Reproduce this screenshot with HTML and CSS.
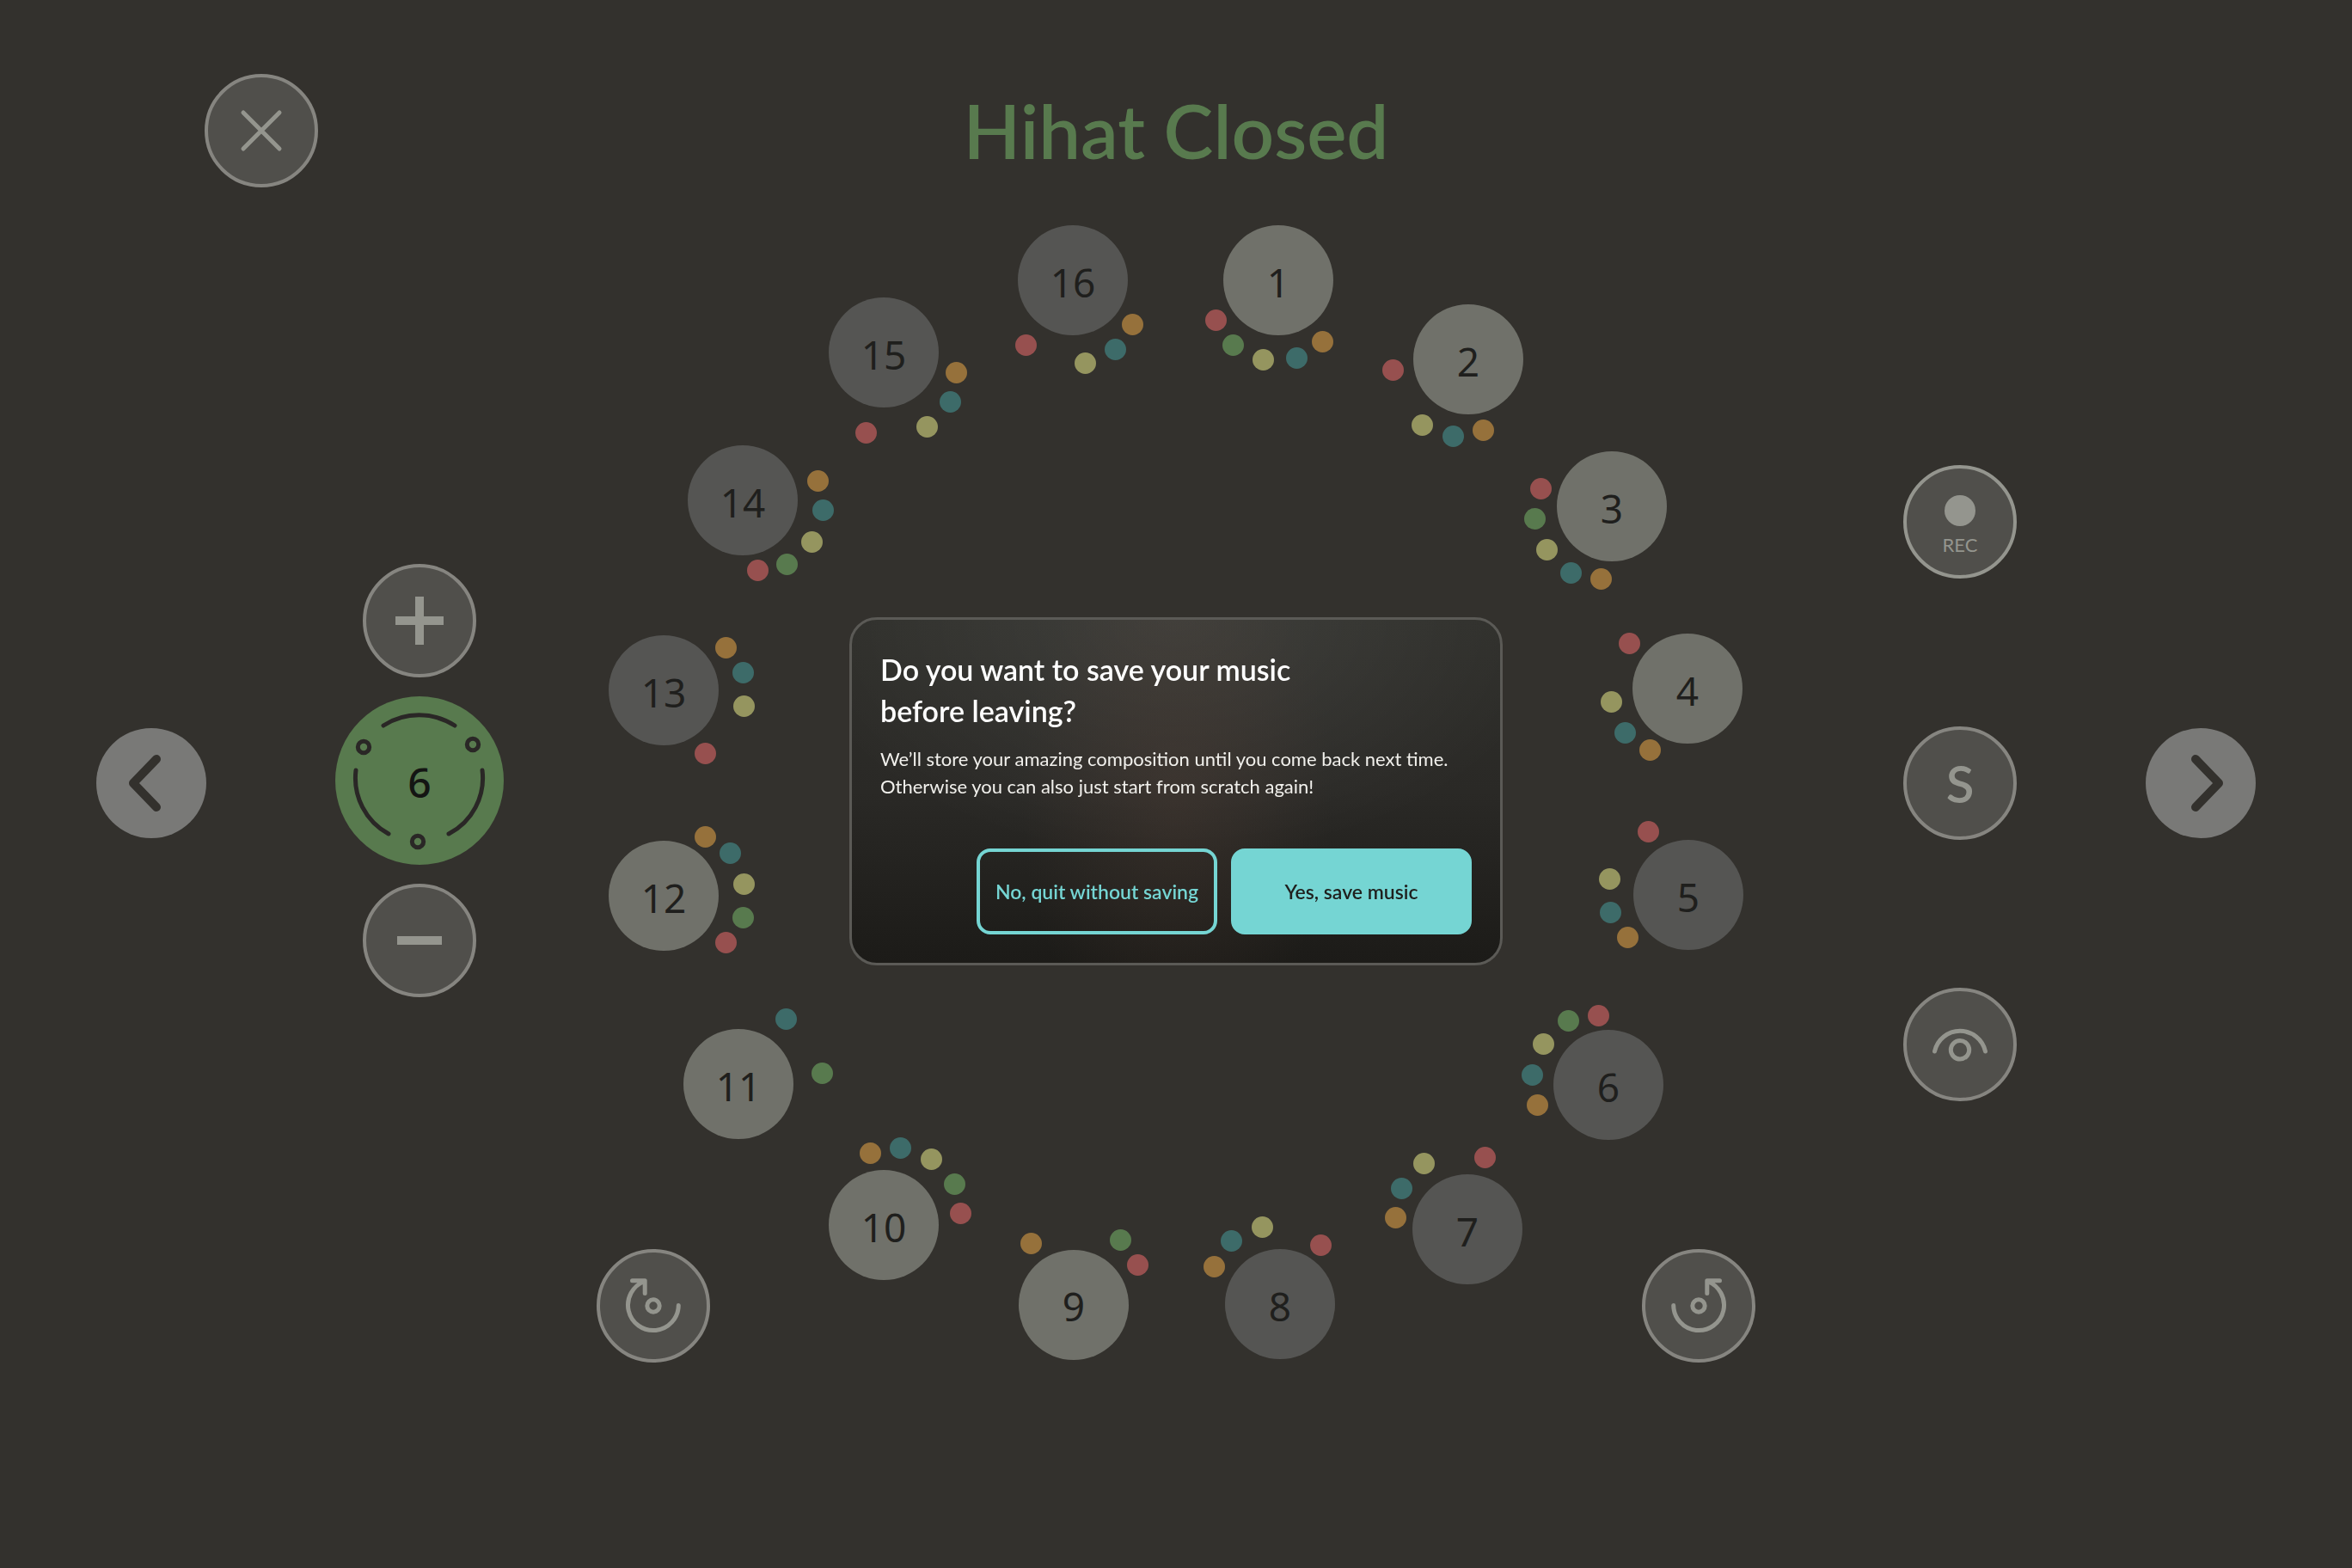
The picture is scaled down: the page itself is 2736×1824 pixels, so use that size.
FILE: index.html
```html
<!DOCTYPE html>
<html lang="en">
<head>
<meta charset="utf-8">
<meta name="viewport" content="width=device-width, initial-scale=1">
<title>Hihat Closed</title>
<link rel="stylesheet" href="styles.css">
</head>
<body>
<div class="page">
  <header class="top">
    <button class="round" type="button" aria-label="Close">
      <svg class="icon" viewBox="-62 -62 124 124"><path d="M-21-21 21 21M21-21-21 21"/></svg>
    </button>
    <h1 class="title">Hihat Closed</h1>
  </header>

  <main class="board">
    <div class="side">
      <button class="arrow" type="button" aria-label="Previous instrument">
        <svg viewBox="-64 -64 128 128"><path d="M6-28-21 0 6 28"/></svg>
      </button>
      <div class="volume">
        <button class="round" type="button" aria-label="Increase">
          <svg class="icon" viewBox="-62 -62 124 124"><path class="bar" d="M-28 0H28M0-28V28"/></svg>
        </button>
        <div class="dial">
          <svg class="dial-art" viewBox="-98 -98 196 196">
            <path d="M-42-64A77 77 0 0 1 41-64M73-12A73 73 0 0 1 34 62M-74-12A74 74 0 0 0-36 62"/>
            <circle cx="-65" cy="-39" r="6.7"/><circle cx="62" cy="-42" r="6.7"/><circle cx="-2" cy="71" r="6.7"/>
          </svg>
          <span class="dial-value">6</span>
        </div>
        <button class="round" type="button" aria-label="Decrease">
          <svg class="icon" viewBox="-62 -62 124 124"><path class="bar" d="M-26 0H26"/></svg>
        </button>
      </div>
    </div>

    <div class="ring">
      <div class="step" style="--x:779;--y:64"><button class="pad on" type="button">1</button><i class="dot red" style="--dx:-73px;--dy:46px"></i><i class="dot green" style="--dx:-53px;--dy:75px"></i><i class="dot yellow" style="--dx:-18px;--dy:92px"></i><i class="dot teal" style="--dx:21px;--dy:90px"></i><i class="dot orange" style="--dx:51px;--dy:71px"></i></div>
      <div class="step" style="--x:1000;--y:156"><button class="pad on" type="button">2</button><i class="dot red" style="--dx:-88px;--dy:12px"></i><i class="dot yellow" style="--dx:-54px;--dy:76px"></i><i class="dot teal" style="--dx:-18px;--dy:89px"></i><i class="dot orange" style="--dx:17px;--dy:82px"></i></div>
      <div class="step" style="--x:1167;--y:327"><button class="pad on" type="button">3</button><i class="dot red" style="--dx:-83px;--dy:-21px"></i><i class="dot green" style="--dx:-90px;--dy:14px"></i><i class="dot yellow" style="--dx:-76px;--dy:50px"></i><i class="dot teal" style="--dx:-48px;--dy:77px"></i><i class="dot orange" style="--dx:-13px;--dy:84px"></i></div>
      <div class="step" style="--x:1255;--y:539"><button class="pad on" type="button">4</button><i class="dot red" style="--dx:-68px;--dy:-53px"></i><i class="dot yellow" style="--dx:-89px;--dy:15px"></i><i class="dot teal" style="--dx:-73px;--dy:51px"></i><i class="dot orange" style="--dx:-44px;--dy:71px"></i></div>
      <div class="step" style="--x:1256;--y:779"><button class="pad" type="button">5</button><i class="dot red" style="--dx:-47px;--dy:-74px"></i><i class="dot yellow" style="--dx:-92px;--dy:-19px"></i><i class="dot teal" style="--dx:-91px;--dy:20px"></i><i class="dot orange" style="--dx:-71px;--dy:49px"></i></div>
      <div class="step" style="--x:1163;--y:1000"><button class="pad" type="button">6</button><i class="dot red" style="--dx:-12px;--dy:-81px"></i><i class="dot green" style="--dx:-47px;--dy:-75px"></i><i class="dot yellow" style="--dx:-76px;--dy:-48px"></i><i class="dot teal" style="--dx:-89px;--dy:-12px"></i><i class="dot orange" style="--dx:-83px;--dy:23px"></i></div>
      <div class="step" style="--x:999;--y:1168"><button class="pad" type="button">7</button><i class="dot red" style="--dx:20px;--dy:-84px"></i><i class="dot yellow" style="--dx:-51px;--dy:-77px"></i><i class="dot teal" style="--dx:-77px;--dy:-48px"></i><i class="dot orange" style="--dx:-84px;--dy:-14px"></i></div>
      <div class="step" style="--x:781;--y:1255"><button class="pad" type="button">8</button><i class="dot red" style="--dx:47px;--dy:-69px"></i><i class="dot yellow" style="--dx:-21px;--dy:-90px"></i><i class="dot teal" style="--dx:-57px;--dy:-74px"></i><i class="dot orange" style="--dx:-77px;--dy:-44px"></i></div>
      <div class="step" style="--x:541;--y:1256"><button class="pad on" type="button">9</button><i class="dot orange" style="--dx:-50px;--dy:-72px"></i><i class="dot green" style="--dx:54px;--dy:-76px"></i><i class="dot red" style="--dx:74px;--dy:-47px"></i></div>
      <div class="step" style="--x:320;--y:1163"><button class="pad on" type="button">10</button><i class="dot orange" style="--dx:-16px;--dy:-84px"></i><i class="dot teal" style="--dx:19px;--dy:-90px"></i><i class="dot yellow" style="--dx:55px;--dy:-77px"></i><i class="dot green" style="--dx:82px;--dy:-48px"></i><i class="dot red" style="--dx:89px;--dy:-14px"></i></div>
      <div class="step" style="--x:151;--y:999"><button class="pad on" type="button">11</button><i class="dot teal" style="--dx:55px;--dy:-76px"></i><i class="dot green" style="--dx:97px;--dy:-13px"></i></div>
      <div class="step" style="--x:64;--y:780"><button class="pad on" type="button">12</button><i class="dot orange" style="--dx:48px;--dy:-69px"></i><i class="dot teal" style="--dx:77px;--dy:-50px"></i><i class="dot yellow" style="--dx:93px;--dy:-14px"></i><i class="dot green" style="--dx:92px;--dy:25px"></i><i class="dot red" style="--dx:72px;--dy:54px"></i></div>
      <div class="step" style="--x:64;--y:541"><button class="pad" type="button">13</button><i class="dot orange" style="--dx:72px;--dy:-50px"></i><i class="dot teal" style="--dx:92px;--dy:-21px"></i><i class="dot yellow" style="--dx:93px;--dy:18px"></i><i class="dot red" style="--dx:48px;--dy:73px"></i></div>
      <div class="step" style="--x:156;--y:320"><button class="pad" type="button">14</button><i class="dot orange" style="--dx:87px;--dy:-23px"></i><i class="dot teal" style="--dx:93px;--dy:11px"></i><i class="dot yellow" style="--dx:80px;--dy:48px"></i><i class="dot green" style="--dx:51px;--dy:74px"></i><i class="dot red" style="--dx:17px;--dy:81px"></i></div>
      <div class="step" style="--x:320;--y:148"><button class="pad" type="button">15</button><i class="dot orange" style="--dx:84px;--dy:23px"></i><i class="dot teal" style="--dx:77px;--dy:57px"></i><i class="dot yellow" style="--dx:50px;--dy:86px"></i><i class="dot red" style="--dx:-21px;--dy:93px"></i></div>
      <div class="step" style="--x:540;--y:64"><button class="pad" type="button">16</button><i class="dot red" style="--dx:-55px;--dy:75px"></i><i class="dot yellow" style="--dx:14px;--dy:96px"></i><i class="dot teal" style="--dx:49px;--dy:80px"></i><i class="dot orange" style="--dx:69px;--dy:51px"></i></div>
      <div class="step" style="--x:52;--y:1257">
        <button class="round" type="button" aria-label="Rotate clockwise">
          <svg class="icon" viewBox="-62 -62 124 124"><path d="M29.3-.5A29.4 29.4 0 1 1-10-28.5M-24.5-29.3H-9.8V-14.5"/><circle r="7.2"/></svg>
        </button>
      </div>
      <div class="step" style="--x:1268;--y:1257">
        <button class="round" type="button" aria-label="Rotate counterclockwise">
          <svg class="icon" viewBox="-62 -62 124 124"><path d="M-29.3-.5A29.4 29.4 0 1 0 10-28.5M24.5-29.3H9.8V-14.5"/><circle r="7.2"/></svg>
        </button>
      </div>
    </div>

    <div class="side end">
      <div class="tools">
        <button class="round rec" type="button"><span class="rec-dot"></span>REC</button>
        <button class="round solo" type="button" aria-label="Solo">S</button>
        <button class="round" type="button" aria-label="View">
          <svg class="icon" viewBox="-62 -62 124 124"><path d="M-29.5 8A30.2 30.2 0 0 1 29.5 8"/><circle cy="6.3" r="10.7"/></svg>
        </button>
      </div>
      <button class="arrow" type="button" aria-label="Next instrument">
        <svg viewBox="-64 -64 128 128"><path d="M-6-28 21 0-6 28"/></svg>
      </button>
    </div>
  </main>
</div>

<div class="overlay">
  <section class="dialog" role="dialog" aria-modal="true" aria-labelledby="dialog-title" aria-describedby="dialog-text">
    <h2 class="dialog-title" id="dialog-title">Do you want to save your music<br>before leaving?</h2>
    <p class="dialog-text" id="dialog-text">We’ll store your amazing composition until you come back next time.<br>Otherwise you can also just start from scratch again!</p>
    <div class="actions">
      <button class="action ghost" type="button">No, quit without saving</button>
      <button class="action primary" type="button">Yes, save music</button>
    </div>
  </section>
</div>
</body>
</html>
```
FILE: styles.css
```css
:root {
  --bg: #33312d;
  --ink: #1f1f1d;
  --fill: #504f4b;
  --rim: #868580;
  --icon: #94958e;
  --green: #587a4e;
  --accent: #75d5d3;
}

* { box-sizing: border-box; }

body {
  margin: 0;
  background: var(--bg);
  color: var(--ink);
  font-family: Lato, "Noto Sans", sans-serif;
}

button {
  padding: 0;
  border: 0;
  font: inherit;
  color: inherit;
  cursor: pointer;
}

svg { display: block; fill: none; stroke-linecap: round; stroke-linejoin: round; }

.page { min-height: 100vh; }

.top {
  display: grid;
  grid-template-columns: 1fr auto 1fr;
  align-items: center;
  padding: 86px 238px 44px;
}

.title {
  margin: 0;
  color: var(--green);
  font-size: 87px;
  font-weight: 600;
  line-height: 132px;
}

.board {
  display: grid;
  grid-template-columns: 1fr minmax(0, 1320px) 1fr;
  padding: 0 112px;
}

.side {
  display: flex;
  align-items: center;
  gap: 150px;
  padding-bottom: 22px;
}

.side.end { justify-content: flex-end; }

.volume, .tools {
  display: flex;
  flex-direction: column;
  align-items: center;
}

.volume { gap: 22px; margin-bottom: 6px; }
.tools { gap: 172px; }

.round {
  display: flex;
  flex-direction: column;
  align-items: center;
  justify-content: center;
  width: 132px;
  height: 132px;
  border: 4px solid var(--rim);
  border-radius: 50%;
  background: var(--fill);
  color: var(--icon);
}

.icon { width: 124px; height: 124px; stroke: var(--icon); stroke-width: 5; }
.icon .bar { stroke-width: 10; stroke-linecap: butt; }

.rec {
  gap: 8px;
  padding-top: 10px;
  border-color: var(--icon);
  font-size: 22px;
  line-height: 28px;
}

.rec-dot {
  width: 36px;
  height: 36px;
  border-radius: 50%;
  background: var(--icon);
}

.solo { font-size: 60px; font-weight: 600; }

.arrow {
  width: 128px;
  height: 128px;
  border-radius: 50%;
  background: #797977;
}

.arrow svg { stroke: var(--bg); stroke-width: 10; }

.dial {
  display: grid;
  place-items: center;
  width: 196px;
  height: 196px;
  border-radius: 50%;
  background: var(--green);
}

.dial > * { grid-area: 1 / 1; }
.dial-art { width: 196px; height: 196px; stroke: #2a2726; stroke-width: 5; }

.dial-value {
  padding-top: 3px;
  color: #141513;
  font: 500 48px/48px "Noto Sans", sans-serif;
}

.ring { position: relative; aspect-ratio: 1; }

/* Steps sit on a 1320-unit square; --x and --y are their centres. */
.step {
  position: absolute;
  left: calc(var(--x) / 1320 * 100%);
  top: calc(var(--y) / 1320 * 100%);
  display: grid;
  place-content: center;
  width: 0;
  height: 0;
}

.pad {
  width: 128px;
  height: 128px;
  padding-top: 3px;
  border-radius: 50%;
  background: #555553;
  font: 400 46px/48px "Noto Sans", sans-serif;
}

.pad.on { background: #70716a; }

.dot {
  position: absolute;
  left: calc(var(--dx) - 12px);
  top: calc(var(--dy) - 12px);
  width: 25px;
  height: 25px;
  border-radius: 50%;
}

.red { background: #97504f; }
.green { background: var(--green); }
.yellow { background: #95955f; }
.teal { background: #3d6b69; }
.orange { background: #96713b; }

.overlay {
  position: fixed;
  inset: 0;
  display: grid;
  place-items: center;
  padding-top: 16px;
}

.dialog {
  width: 760px;
  max-width: 100%;
  padding: 34px 33px 33px;
  border: 3px solid #5b5a56;
  border-radius: 32px;
  background:
    radial-gradient(ellipse 24% 80% at 50% 50%, rgba(84, 64, 54, .32), rgba(84, 64, 54, 0)),
    radial-gradient(ellipse 60% 70% at 50% 0, rgba(255, 255, 255, .08), rgba(255, 255, 255, 0)),
    linear-gradient(#2f2f2b, #2a2926 50%, #1c1b18);
}

.dialog-title {
  margin: 0 0 16px;
  color: #fff;
  font-size: 34px;
  font-weight: 600;
  line-height: 48px;
}

.dialog-text {
  margin: 0 0 56px;
  color: #f1f0ec;
  font-size: 22px;
  line-height: 32px;
}

.actions {
  display: flex;
  justify-content: flex-end;
  gap: 16px;
}

.action {
  width: 280px;
  height: 100px;
  border: 4px solid var(--accent);
  border-radius: 16px;
  font-size: 23px;
  font-weight: 600;
}

.ghost { background: transparent; color: var(--accent); }
.primary { background: var(--accent); }
```
